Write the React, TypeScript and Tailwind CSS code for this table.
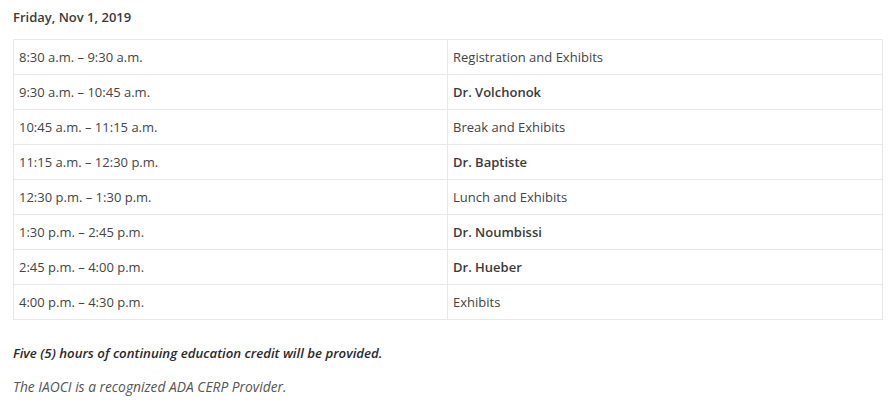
const rows: { time: string; label: string; bold?: boolean }[] = [
  { time: '8:30 a.m. – 9:30 a.m.', label: 'Registration and Exhibits' },
  { time: '9:30 a.m. – 10:45 a.m.', label: 'Dr. Volchonok', bold: true },
  { time: '10:45 a.m. – 11:15 a.m.', label: 'Break and Exhibits' },
  { time: '11:15 a.m. – 12:30 p.m.', label: 'Dr. Baptiste', bold: true },
  { time: '12:30 p.m. – 1:30 p.m.', label: 'Lunch and Exhibits' },
  { time: '1:30 p.m. – 2:45 p.m.', label: 'Dr. Noumbissi', bold: true },
  { time: '2:45 p.m. – 4:00 p.m.', label: 'Dr. Hueber', bold: true },
  { time: '4:00 p.m. – 4:30 p.m.', label: 'Exhibits' },
];

export default function App() {
  return (
    <div
      className="w-[896px] h-[420px] bg-white px-[13px] pt-[8px] text-[13px] text-[#444]"
      style={{ fontFamily: '"Open Sans", "Liberation Sans", sans-serif' }}
    >
      <h3 className="text-[13px] font-semibold text-[#3a3a3a] leading-[18px]">Friday, Nov 1, 2019</h3>

      <table className="mt-[13px] w-[870px] border-collapse">
        <tbody>
          {rows.map((r) => (
            <tr key={r.time} className="h-[35px]">
              <td className="w-[434px] border border-[#e8e8e8] pl-[5px] pt-[2px] align-middle">{r.time}</td>
              <td
                className={`border border-[#e8e8e8] pl-[5px] pt-[2px] align-middle ${
                  r.bold ? 'font-semibold text-[#3a3a3a]' : ''
                }`}
              >
                {r.label}
              </td>
            </tr>
          ))}
        </tbody>
      </table>

      <p className="mt-[24px] italic font-semibold text-[#2a2a2a] text-[13.25px] leading-[18px]">
        Five (5) hours of continuing education credit will be provided.
      </p>
      <p className="mt-[16px] italic text-[#555] text-[13.8px] leading-[18px]">
        The IAOCI is a recognized ADA CERP Provider.
      </p>
    </div>
  );
}
